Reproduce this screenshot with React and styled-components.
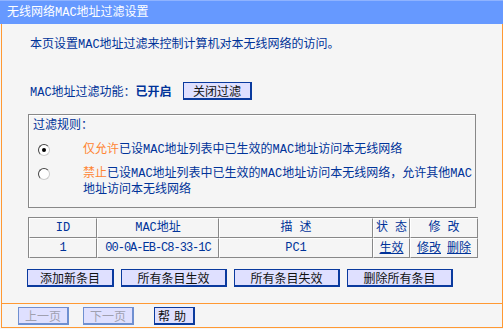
import React from 'react'
import styled, { createGlobalStyle } from 'styled-components'

const GlobalStyle = createGlobalStyle`
  body {
    margin: 0;
    background: #f5f5f5;
    font-family: "Liberation Mono", "Noto Sans CJK SC", monospace;
    font-size: 12px;
    color: #003399;
  }
`

const Page = styled.div`
  width: 503px;
`

const TitleBar = styled.div`
  height: 24px;
  line-height: 24px;
  background: #6699ff;
  border-top: 1px solid #8fb3ff;
  box-sizing: border-box;
  color: #fff;
  padding-left: 7px;
  font-size: 12px;
`

const Panel = styled.div`
  margin-left: 1px;
  border: 1px solid #ff9933;
  border-top: none;
`

const Main = styled.div`
  border-bottom: 1px solid #ff9933;
  padding: 13px 0 16px 26px;
`

const Intro = styled.div`
  line-height: 16px;
  padding-left: 2px;
`

const MacRow = styled.div`
  display: flex;
  align-items: center;
  margin-top: 29px;
  height: 18px;
  padding-left: 2px;
`

const MacLabel = styled.span`
  width: 153px;
`

const Strong = styled.b`
  font-weight: bold;
`

const Button = styled.button`
  height: 18px;
  width: ${p => p.$w}px;
  padding: 0;
  background: #dfe0ff;
  border: 1px solid #0a3a9e;
  border-right-width: 2px;
  border-bottom-width: 2px;
  font-family: "Noto Sans CJK SC", sans-serif;
  font-size: 12px;
  line-height: 14px;
  color: ${p => (p.$disabled ? '#a0a0b0' : '#111')};
  border-color: ${p => (p.$disabled ? '#6f8fd0' : '#0a3a9e')};
  letter-spacing: ${p => p.$spread || 0}px;
  cursor: pointer;
`

const RuleBox = styled.div`
  margin-top: 14px;
  width: 446px;
  border: 1px solid #888;
  box-shadow: inset 1px 1px 0 #fff;
  padding: 3px 0 9px 0;
`

const RuleLabel = styled.div`
  line-height: 16px;
  padding-left: 4px;
`

const Option = styled.div`
  display: grid;
  grid-template-columns: 54px 1fr;
  margin-top: 8px;
  line-height: 16px;
  white-space: nowrap;
`

const Radio = styled.span`
  display: block;
  width: 10px;
  height: 10px;
  margin: 2px 0 0 9px;
  border-radius: 50%;
  background: #fff;
  border: 1px solid #444;
  border-right-color: #ccc;
  border-bottom-color: #ccc;
  position: relative;
  &::after {
    content: '';
    display: ${p => (p.$checked ? 'block' : 'none')};
    position: absolute;
    left: 3px;
    top: 3px;
    width: 4px;
    height: 4px;
    border-radius: 50%;
    background: #000;
  }
`

const Hi = styled.span`
  color: #ff8533;
`

const Table = styled.table`
  margin-top: 9px;
  width: 449px;
  table-layout: fixed;
  border-collapse: separate;
  border-spacing: 0;
  border-top: 1px solid #888;
  border-left: 1px solid #888;
`

const Cell = styled.td`
  height: 18px;
  padding: 0;
  text-align: center;
  line-height: 16px;
  border-right: 1px solid #888;
  border-bottom: 1px solid #888;
  border-left: 1px solid #fff;
  border-top: 1px solid #fff;
`

const Mac = styled.span`
  letter-spacing: -1px;
`

const Link = styled.a`
  color: #003399;
  text-decoration: underline;
  font-family: "Noto Sans CJK SC", sans-serif;
  & + & {
    margin-left: 6px;
  }
`

const ButtonRow = styled.div`
  display: flex;
  gap: 7px;
  margin-top: 11px;
  margin-left: -1px;
`

const Footer = styled.div`
  height: 23px;
  display: flex;
  gap: 14px;
  padding: 3px 0 0 16px;
  box-sizing: border-box;
`

const HelpWrap = styled.div`
  margin-left: 6px;
`

const cols = [68, 122, 154, 37, 68]

export default function App() {
  return (
    <Page>
      <GlobalStyle />
      <TitleBar>无线网络MAC地址过滤设置</TitleBar>
      <Panel>
        <Main>
          <Intro>本页设置MAC地址过滤来控制计算机对本无线网络的访问。</Intro>
          <MacRow>
            <MacLabel>
              MAC地址过滤功能：<Strong>已开启</Strong>
            </MacLabel>
            <Button $w={69}>关闭过滤</Button>
          </MacRow>
          <RuleBox>
            <RuleLabel>过滤规则：</RuleLabel>
            <Option>
              <Radio $checked />
              <span>
                <Hi>仅允许</Hi>已设MAC地址列表中已生效的MAC地址访问本无线网络
              </span>
            </Option>
            <Option>
              <Radio />
              <span>
                <Hi>禁止</Hi>已设MAC地址列表中已生效的MAC地址访问本无线网络，允许其他MAC
                <br />
                地址访问本无线网络
              </span>
            </Option>
          </RuleBox>
          <Table>
            <colgroup>
              {cols.map((w, i) => (
                <col key={i} style={{ width: w }} />
              ))}
            </colgroup>
            <tbody>
              <tr>
                <Cell>ID</Cell>
                <Cell>MAC地址</Cell>
                <Cell>描 述</Cell>
                <Cell>状 态</Cell>
                <Cell>修 改</Cell>
              </tr>
              <tr>
                <Cell>1</Cell>
                <Cell>
                  <Mac>00-0A-EB-C8-33-1C</Mac>
                </Cell>
                <Cell>PC1</Cell>
                <Cell>
                  <Link>生效</Link>
                </Cell>
                <Cell>
                  <Link>修改</Link>
                  <Link>删除</Link>
                </Cell>
              </tr>
            </tbody>
          </Table>
          <ButtonRow>
            <Button $w={87}>添加新条目</Button>
            <Button $w={106}>所有条目生效</Button>
            <Button $w={106}>所有条目失效</Button>
            <Button $w={106}>删除所有条目</Button>
          </ButtonRow>
        </Main>
        <Footer>
          <Button $w={51} $disabled>上一页</Button>
          <Button $w={51} $disabled>下一页</Button>
          <HelpWrap>
            <Button $w={41} $spread={4}>帮助</Button>
          </HelpWrap>
        </Footer>
      </Panel>
    </Page>
  )
}
